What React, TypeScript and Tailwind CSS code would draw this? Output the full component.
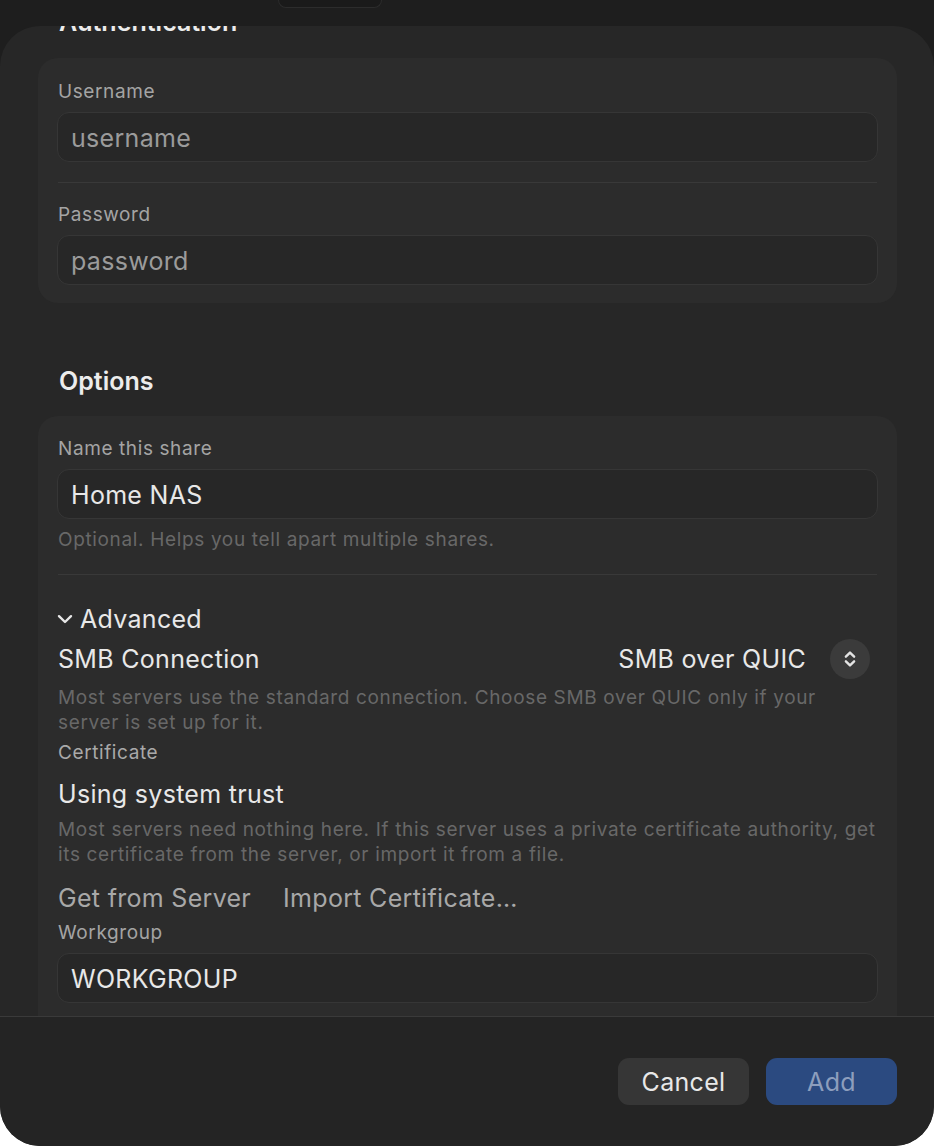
const font = { fontFamily: "Inter, 'Noto Sans', sans-serif" };

function Field({ label, value, placeholder }: { label: string; value?: string; placeholder?: string }) {
  return (
    <div className="flex flex-col">
      <div className="pl-px text-[19px] leading-[24px] tracking-[0.6px] text-[#a4a4a4]">{label}</div>
      <input
        readOnly
        value={value ?? ""}
        placeholder={placeholder}
        className="mt-[8px] h-[50px] w-full rounded-[12px] border border-[#363636] bg-[#272727] px-[13px] pt-px text-[25px] tracking-[0.3px] text-[#e8e8e8] outline-none placeholder:text-[#9b9b9b]"
        style={font}
      />
    </div>
  );
}

function Helper({ children, className = "" }: { children: React.ReactNode; className?: string }) {
  return <p className={"pl-px text-[19px] leading-[25px] tracking-[0.65px] text-[#686868] " + className}>{children}</p>;
}

function StepperIcon() {
  return (
    <svg width="22" height="22" viewBox="0 0 24 24" fill="none" stroke="#e4e4e4" strokeWidth="2.6" strokeLinecap="round" strokeLinejoin="round">
      <path d="m7.5 9.5 4.5-4.5 4.5 4.5" />
      <path d="m7.5 14.5 4.5 4.5 4.5-4.5" />
    </svg>
  );
}

function Chevron() {
  return (
    <svg width="16" height="10" viewBox="0 0 16 10" fill="none" stroke="#e8e8e8" strokeWidth="2.4" strokeLinecap="round" strokeLinejoin="round">
      <path d="M2 2.2 8 8l6-5.8" />
    </svg>
  );
}

export default function App() {
  return (
    <div
      className="flex h-[1146px] w-[934px] flex-col overflow-hidden bg-[linear-gradient(#1e1e1e_0_600px,#ffffff_600px)]"
      style={font}
    >
      {/* fundo de trás */}
      <div className="h-[26px] shrink-0">
        <div className="ml-[278px] h-[8px] w-[104px] rounded-b-[8px] border border-t-0 border-[#2c2c2c] bg-[#1a1a1a]" />
      </div>

      {/* sheet */}
      <div className="flex flex-1 flex-col overflow-hidden rounded-[40px] bg-[#272727]">
        <div className="flex-1 overflow-hidden">
          <div className="-mt-[19px] pl-[38px] pr-[37px]">
            <h2 className="pl-[21px] text-[25px] font-semibold leading-[30px] text-[#ececec]">Authentication</h2>

            <div className="mt-[21px] rounded-[20px] bg-[#2c2c2c] px-[19px] pb-[18px] pt-[22px]">
              <Field label="Username" placeholder="username" />
              <div className="mx-px my-[20px] h-px bg-[#393939]" />
              <Field label="Password" placeholder="password" />
            </div>

            <h2 className="mt-[63px] pl-[21px] text-[25px] font-semibold leading-[30px] text-[#ececec]">Options</h2>

            <div className="mt-[20px] rounded-t-[20px] bg-[#2c2c2c] px-[19px] pt-[21px] pb-[40px]">
              <Field label="Name this share" value="Home NAS" />
              <Helper className="mt-[8px]">Optional. Helps you tell apart multiple shares.</Helper>
              <div className="mx-px mt-[22px] h-px bg-[#393939]" />

              <div className="mt-[29px] flex items-center gap-[7px] text-[25px] leading-[30px] tracking-[0.3px] text-[#e8e8e8]">
                <Chevron />
                <span>Advanced</span>
              </div>

              <div className="mt-[5px] flex items-center justify-between pl-px text-[25px] leading-[30px] tracking-[0.3px] text-[#e8e8e8]">
                <span>SMB Connection</span>
                <div className="flex items-center gap-[24px] pr-[8px]">
                  <span>SMB over QUIC</span>
                  <div className="flex h-[40px] w-[40px] items-center justify-center rounded-full bg-[#3b3b3b]">
                    <StepperIcon />
                  </div>
                </div>
              </div>
              <Helper className="mt-[6px]">
                Most servers use the standard connection. Choose SMB over QUIC only if your
                <br />
                server is set up for it.
              </Helper>

              <div className="mt-[6px] pl-px text-[19px] leading-[24px] tracking-[0.6px] text-[#a9a9a9]">Certificate</div>
              <div className="mt-[14px] pl-px text-[25px] leading-[30px] tracking-[0.3px] text-[#e8e8e8]">Using system trust</div>
              <Helper className="mt-[8px]">
                Most servers need nothing here. If this server uses a private certificate authority, get
                <br />
                its certificate from the server, or import it from a file.
              </Helper>

              <div className="mt-[16px] flex gap-[32px] pl-px text-[25px] leading-[30px] tracking-[0.3px] text-[#a8a8a8]">
                <span>Get from Server</span>
                <span>Import Certificate…</span>
              </div>

              <div className="mt-[8px]">
                <Field label="Workgroup" value="WORKGROUP" />
              </div>
              <Helper className="mt-[11px]">Used only by some servers. Leave it blank if you are not sure.</Helper>
            </div>
          </div>
        </div>

        {/* rodapé */}
        <div className="flex h-[130px] shrink-0 justify-end gap-[17px] border-t border-[#3a3a3a] bg-[#242424] pr-[37px] pt-[41px]">
          <button className="h-[47px] w-[131px] rounded-[11px] bg-[#363636] pt-[3px] text-[25px] tracking-[0.3px] text-[#e8e8e8]">Cancel</button>
          <button className="h-[47px] w-[131px] rounded-[11px] bg-[#2b4a80] pt-[3px] text-[25px] tracking-[0.3px] text-[#8d9ebd]">Add</button>
        </div>
      </div>
    </div>
  );
}
